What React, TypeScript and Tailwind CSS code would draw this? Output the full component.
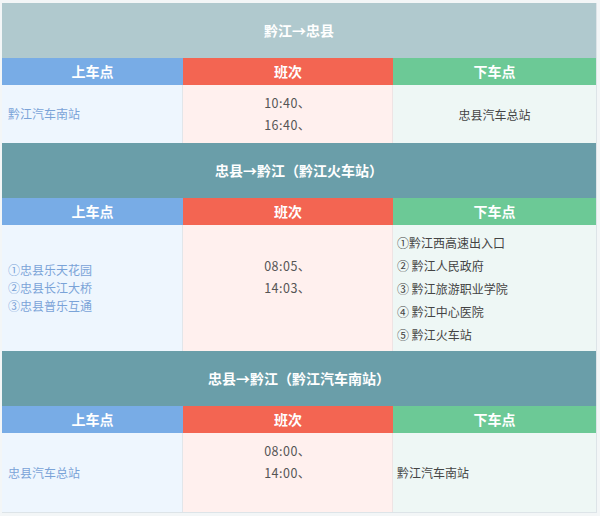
import React from 'react';

type Section = {
  title: string;
  titleBg: string;
  dataH: string;
  board: string[];
  times: string[];
  alight: string[];
  alightCenter: boolean;
};

const sections: Section[] = [
  {
    title: '黔江→忠县',
    titleBg: 'bg-[#b0c9ce]',
    dataH: 'h-[58px]',
    board: ['黔江汽车南站'],
    times: ['10:40、', '16:40、'],
    alight: ['忠县汽车总站'],
    alightCenter: true,
  },
  {
    title: '忠县→黔江（黔江火车站）',
    titleBg: 'bg-[#6a9ea9]',
    dataH: 'h-[126px]',
    board: ['①忠县乐天花园', '②忠县长江大桥', '③忠县普乐互通'],
    times: ['08:05、', '14:03、', ''],
    alight: ['①黔江西高速出入口', '② 黔江人民政府', '③ 黔江旅游职业学院', '④ 黔江中心医院', '⑤ 黔江火车站'],
    alightCenter: false,
  },
  {
    title: '忠县→黔江（黔江汽车南站）',
    titleBg: 'bg-[#6a9ea9]',
    dataH: 'h-[79px]',
    board: ['忠县汽车总站'],
    times: ['08:00、', '14:00、', ''],
    alight: ['黔江汽车南站'],
    alightCenter: false,
  },
];

const grid = 'grid grid-cols-[181px_210px_1fr]';

export default function App() {
  return (
    <div className="w-[600px] h-[516px] bg-[#f3f6f7] pt-[3px] pl-[2px] font-['Noto_Sans_CJK_SC','Noto_Sans',sans-serif]">
      <div className="w-[595px] border-b border-r border-[#dde4e8]">
        {sections.map((s, i) => (
          <div key={i}>
            {/* route title */}
            <div className={`h-[55px] flex items-center justify-center text-white font-bold text-[14px] ${s.titleBg}`}>
              {s.title}
            </div>
            {/* column headers */}
            <div className={`${grid} h-[27px] text-white font-bold text-[14px]`}>
              <div className="bg-[#78ace6] flex items-center justify-center">上车点</div>
              <div className="bg-[#f36552] flex items-center justify-center">班次</div>
              <div className="bg-[#6cc996] flex items-center justify-center">下车点</div>
            </div>
            {/* data row */}
            <div className={`${grid} ${s.dataH} text-[12px]`}>
              <div className="bg-[#eef6fe] border-r border-[#e2e6ea] flex flex-col justify-center pl-[6px] text-[#7aa3d8] leading-[18px]">
                {s.board.map((b) => (
                  <div key={b}>{b}</div>
                ))}
              </div>
              <div className="bg-[#fff0ee] border-r border-[#eee4e4] flex flex-col justify-center items-center text-[#555] text-[12.5px] leading-[22px] tracking-[0.5px]">
                {s.times.map((t, j) => (
                  <div key={j} className="h-[22px]">{t}</div>
                ))}
              </div>
              <div
                className={`bg-[#eef7f5] flex flex-col justify-center text-[#444] leading-[23px] ${
                  s.alightCenter ? 'items-center' : 'pl-[4px]'
                }`}
              >
                {s.alight.map((a) => (
                  <div key={a}>{a}</div>
                ))}
              </div>
            </div>
          </div>
        ))}
      </div>
    </div>
  );
}
